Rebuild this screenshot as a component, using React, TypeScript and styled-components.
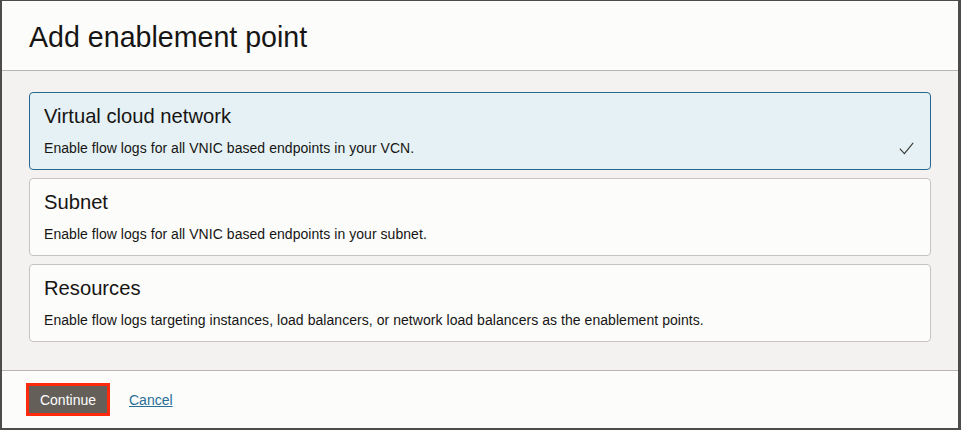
import React, { useState } from 'react';
import styled, { createGlobalStyle } from 'styled-components';

const GlobalStyle = createGlobalStyle`
  html, body {
    margin: 0;
    padding: 0;
    background: #fcfcfb;
  }
  body {
    font-family: 'Liberation Sans', Arial, Helvetica, sans-serif;
    color: #161513;
  }
`;

const options = [
  {
    id: 'vcn',
    title: 'Virtual cloud network',
    description: 'Enable flow logs for all VNIC based endpoints in your VCN.',
  },
  {
    id: 'subnet',
    title: 'Subnet',
    description: 'Enable flow logs for all VNIC based endpoints in your subnet.',
  },
  {
    id: 'resources',
    title: 'Resources',
    description:
      'Enable flow logs targeting instances, load balancers, or network load balancers as the enablement points.',
  },
];

const Check = () => (
  <svg width="15" height="13" viewBox="0 0 15 13" fill="none">
    <path d="M0.8 6.6 L5.4 11.6 L14.2 0.8" stroke="#3a3835" strokeWidth="1.1" />
  </svg>
);

export default function App() {
  const [selected, setSelected] = useState('vcn');

  return (
    <>
      <GlobalStyle />
      <Frame>
        <Header>
          <Title>Add enablement point</Title>
        </Header>
        <Body>
          {options.map((o) => (
            <Card
              key={o.id}
              $active={selected === o.id}
              onClick={() => setSelected(o.id)}
            >
              <CardTitle>{o.title}</CardTitle>
              <CardRow>
                <CardText>{o.description}</CardText>
                {selected === o.id && <Check />}
              </CardRow>
            </Card>
          ))}
        </Body>
        <Footer>
          <Highlight>
            <PrimaryBtn>Continue</PrimaryBtn>
          </Highlight>
          <CancelLink href="#">Cancel</CancelLink>
        </Footer>
      </Frame>
    </>
  );
}

const Frame = styled.div`
  box-sizing: border-box;
  height: 430px;
  display: flex;
  flex-direction: column;
  border-style: solid;
  border-color: #4e4c4a;
  border-width: 1px 3px 2px 2px;
  background: #fcfcfb;
`;

const Header = styled.div`
  height: 70px;
  flex-shrink: 0;
  display: flex;
  align-items: center;
  padding-left: 27px;
  padding-top: 3px;
  box-sizing: border-box;
  border-bottom: 1px solid #b8b4b0;
`;

const Title = styled.h1`
  margin: 0;
  font-size: 28.6px;
  font-weight: 400;
  color: #161513;
`;

const Body = styled.div`
  flex: 1;
  background: #f3f2f1;
  padding: 21px 27px;
  display: flex;
  flex-direction: column;
  gap: 8px;
`;

const Card = styled.div<{ $active: boolean }>`
  box-sizing: border-box;
  height: 78px;
  padding: 11px 16px 0 14px;
  border-radius: 4px;
  cursor: pointer;
  border: 1px solid ${(p) => (p.$active ? '#24698e' : '#c7c4c0')};
  background: ${(p) => (p.$active ? '#e5f1f4' : '#fcfcfb')};
`;

const CardTitle = styled.div`
  font-size: 20.2px;
  line-height: 24px;
  color: #161513;
`;

const CardRow = styled.div`
  display: flex;
  align-items: center;
  justify-content: space-between;
  margin-top: 12px;
`;

const CardText = styled.div`
  font-size: 14px;
  line-height: 16px;
  letter-spacing: 0.05px;
  color: #161513;
`;

const Footer = styled.div`
  height: 58px;
  flex-shrink: 0;
  box-sizing: border-box;
  border-top: 1px solid #b8b4b0;
  display: flex;
  align-items: center;
  padding-left: 24px;
  gap: 19px;
  background: #fcfcfb;
`;

const Highlight = styled.div`
  border: 3px solid #ff2a0c;
  display: flex;
`;

const PrimaryBtn = styled.button`
  width: 78px;
  height: 27px;
  border: none;
  border-radius: 0;
  padding: 0;
  background: #655f5a;
  color: #ffffff;
  font-family: 'Liberation Sans', Arial, sans-serif;
  font-size: 14px;
  cursor: pointer;
`;

const CancelLink = styled.a`
  font-size: 14px;
  color: #2a6f97;
  text-decoration: underline;
`;
